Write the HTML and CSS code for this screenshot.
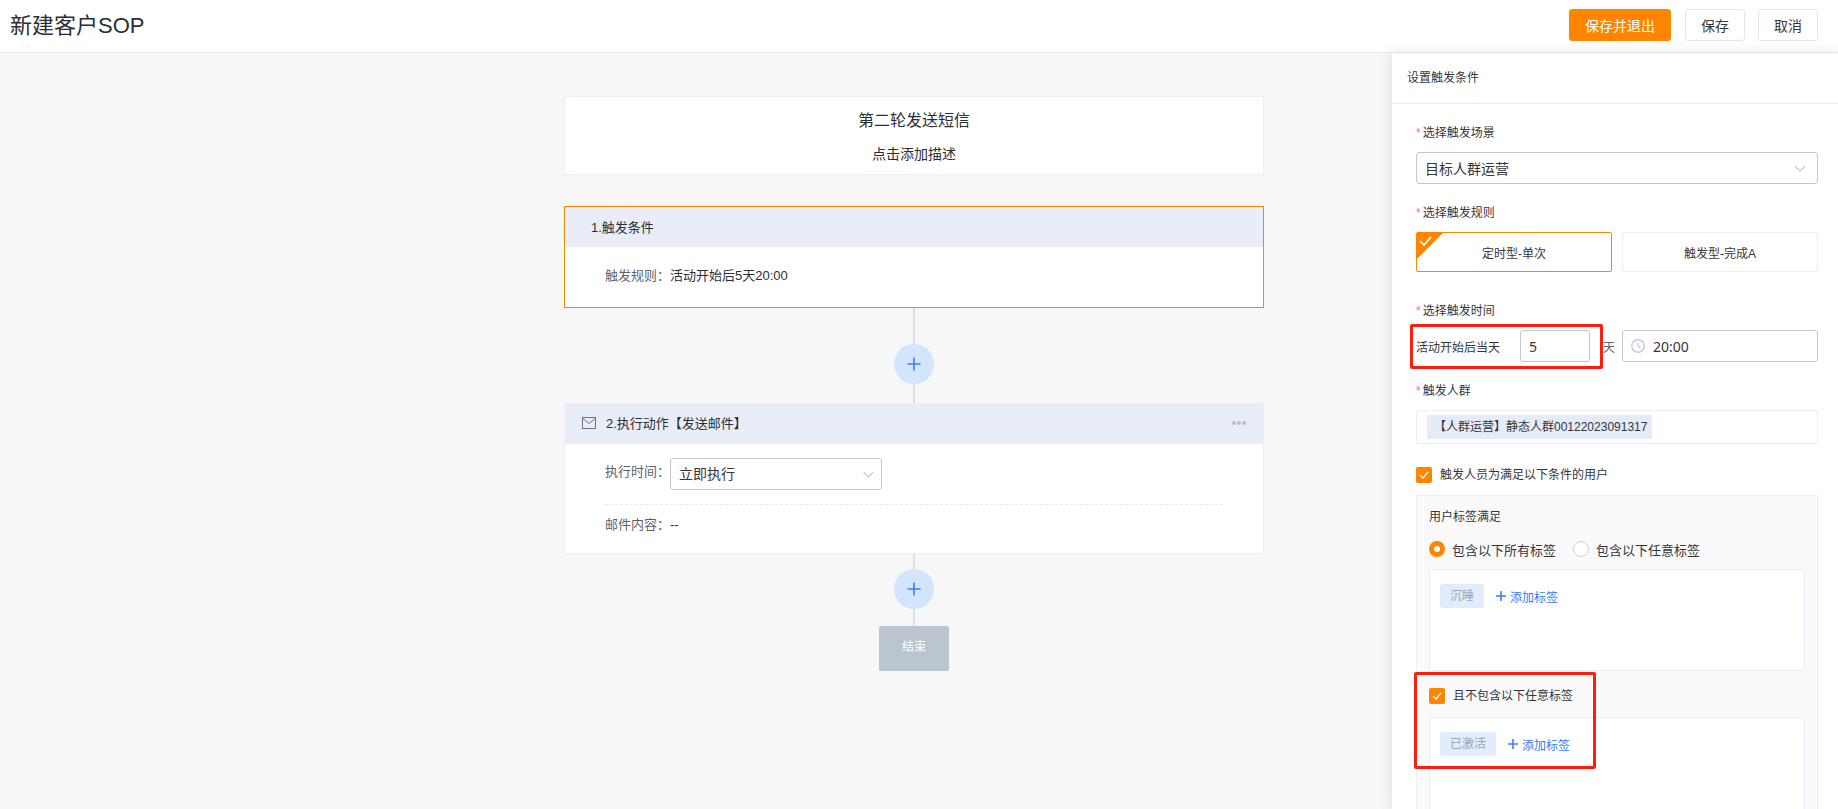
FILE: index.html
```html
<!DOCTYPE html>
<html lang="zh-CN">
<head>
<meta charset="utf-8">
<title>新建客户SOP</title>
<link rel="stylesheet" href="styles.css">
</head>
<body>
<header class="topbar">
  <h1 class="page-title">新建客户SOP</h1>
  <div class="top-actions">
    <button class="btn btn-primary">保存并退出</button>
    <button class="btn">保存</button>
    <button class="btn">取消</button>
  </div>
</header>
<div class="main">
  <section class="canvas">
    <div class="flow">
      <div class="intro-card">
        <div class="intro-title">第二轮发送短信</div>
        <div class="intro-desc">点击添加描述</div>
      </div>
      <div class="trigger-card">
        <div class="card-head trigger-head">1.触发条件</div>
        <div class="trigger-body"><span class="key">触发规则：</span>活动开始后5天20:00</div>
      </div>
      <div class="line line-a"></div>
      <div class="add-circle"><svg width="14" height="14" viewBox="0 0 14 14"><path d="M7 0.5V13.5M0.5 7H13.5" stroke="#3f7cf7" stroke-width="1.6" fill="none"/></svg></div>
      <div class="line line-b"></div>
      <div class="action-card">
        <div class="card-head action-head">
          <svg class="mail-icon" width="14" height="12" viewBox="0 0 14 12"><rect x="0.5" y="0.5" width="13" height="11" fill="none" stroke="#6f7480"/><path d="M0.8 1.5L7 6.5L13.2 1.5" fill="none" stroke="#6f7480"/></svg>
          <span class="action-title">2.执行动作【发送邮件】</span>
          <span class="dots"><i></i><i></i><i></i></span>
        </div>
        <div class="action-body">
          <div class="action-row">
            <span class="key">执行时间：</span>
            <div class="select select-small">
              <span>立即执行</span>
              <svg class="chev" width="11" height="7" viewBox="0 0 11 7"><path d="M0.5 0.8L5.5 6L10.5 0.8" fill="none" stroke="#c3c7d0" stroke-width="1.2"/></svg>
            </div>
          </div>
          <div class="mail-row"><span class="key">邮件内容：</span>--</div>
        </div>
      </div>
      <div class="line line-c"></div>
      <div class="add-circle"><svg width="14" height="14" viewBox="0 0 14 14"><path d="M7 0.5V13.5M0.5 7H13.5" stroke="#3f7cf7" stroke-width="1.6" fill="none"/></svg></div>
      <div class="line line-d"></div>
      <div class="end-node">结束</div>
    </div>
  </section>
  <aside class="panel">
    <div class="panel-title">设置触发条件</div>
    <div class="panel-body">
      <div class="label label-first"><b>*</b>选择触发场景</div>
      <div class="select">
        <span>目标人群运营</span>
        <svg class="chev" width="12" height="7" viewBox="0 0 12 7"><path d="M1 1L6 6L11 1" fill="none" stroke="#c3c7d0" stroke-width="1.2"/></svg>
      </div>
      <div class="label label-rule"><b>*</b>选择触发规则</div>
      <div class="rule-row">
        <div class="rule rule-on">
          <svg class="corner" width="26" height="26" viewBox="0 0 26 26"><path d="M0 0H26L0 26Z" fill="#ff8400"/><path d="M3 8L7 12L14 4" fill="none" stroke="#fff" stroke-width="1.6"/></svg>
          定时型-单次
        </div>
        <div class="rule">触发型-完成A</div>
      </div>
      <div class="label label-time"><b>*</b>选择触发时间</div>
      <div class="time-row">
        <span class="time-text">活动开始后当天</span>
        <div class="num-input">5</div>
        <span class="day">天</span>
        <div class="clock-input">
          <svg width="14" height="14" viewBox="0 0 14 14"><circle cx="7" cy="7" r="6.2" fill="none" stroke="#c3c7d6" stroke-width="1.4"/><path d="M7 3.5V7.3L9.5 9" fill="none" stroke="#c3c7d6" stroke-width="1.2"/></svg>
          <span>20:00</span>
        </div>
        <div class="mark mark-time"></div>
      </div>
      <div class="label label-crowd"><b>*</b>触发人群</div>
      <div class="crowd-box"><span class="crowd-tag">【人群运营】静态人群00122023091317</span></div>
      <div class="check-row check-row-outer">
        <span class="checkbox"><svg width="10" height="8" viewBox="0 0 10 8"><path d="M1 4L4 7L9 1" fill="none" stroke="#fff" stroke-width="1.2"/></svg></span>
        <span>触发人员为满足以下条件的用户</span>
      </div>
      <div class="cond-box">
        <div class="cond-title">用户标签满足</div>
        <div class="radio-row">
          <span class="radio radio-on"></span><span class="radio-text">包含以下所有标签</span>
          <span class="radio"></span><span class="radio-text">包含以下任意标签</span>
        </div>
        <div class="tag-box">
          <span class="tag tag-two">沉睡</span>
          <span class="add-tag"><svg width="10" height="10" viewBox="0 0 10 10"><path d="M5 0V10M0 5H10" stroke="#3f7cf7" stroke-width="1.6" fill="none"/></svg>添加标签</span>
        </div>
        <div class="check-row check-row-inner">
          <span class="checkbox"><svg width="10" height="8" viewBox="0 0 10 8"><path d="M1 4L4 7L9 1" fill="none" stroke="#fff" stroke-width="1.2"/></svg></span>
          <span>且不包含以下任意标签</span>
        </div>
        <div class="tag-box tag-box-last">
          <span class="tag tag-three">已激活</span>
          <span class="add-tag"><svg width="10" height="10" viewBox="0 0 10 10"><path d="M5 0V10M0 5H10" stroke="#3f7cf7" stroke-width="1.6" fill="none"/></svg>添加标签</span>
        </div>
        <div class="mark mark-exclude"></div>
      </div>
    </div>
  </aside>
</div>
</body>
</html>
```

FILE: styles.css
```css
* { box-sizing: border-box; }
html, body { height: 100%; }
body {
  margin: 0;
  height: 809px;
  overflow: hidden;
  display: flex;
  flex-direction: column;
  background: #f7f7f7;
  color: #33363d;
  font-family: "Liberation Sans", "Noto Sans CJK SC", sans-serif;
  font-size: 12px;
}
.topbar {
  flex: none;
  height: 53px;
  display: flex;
  align-items: center;
  justify-content: space-between;
  padding: 0 20px 2px 10px;
  background: #fff;
  border-bottom: 1px solid #e8ecf4;
}
.page-title { margin: 2px 0 0; font-size: 22px; font-weight: 400; color: #2b2e35; line-height: 30px; }
.top-actions { display: flex; gap: 13px; }
.btn {
  width: 60px;
  height: 32px;
  padding: 0;
  border: 1px solid #e3e6ef;
  border-radius: 3px;
  background: #fff;
  color: #33363d;
  font: inherit;
  font-size: 14px;
}
.btn-primary {
  width: 102px;
  margin-right: 1px;
  background: #ff8400;
  border-color: #ff8400;
  color: #fff;
}
.main { flex: 1; min-height: 0; display: flex; }
.canvas { flex: 1; min-width: 0; padding: 43px 0 0 564px; }
.flow { width: 700px; display: flex; flex-direction: column; align-items: center; }
.intro-card {
  width: 100%;
  height: 79px;
  display: flex;
  flex-direction: column;
  align-items: center;
  background: #fff;
  border: 1px solid #eceef8;
  color: #2b2e35;
}
.intro-title { margin-top: 13px; font-size: 16px; line-height: 22px; }
.intro-desc { margin-top: 12px; font-size: 14px; line-height: 20px; }
.trigger-card {
  width: 100%;
  height: 102px;
  margin-top: 31px;
  background: #fff;
  border: 1px solid #ff8400;
}
.card-head { background: #e9edf7; display: flex; align-items: center; font-size: 13px; color: #2b2e35; }
.trigger-head { height: 40px; padding: 0 0 2px 26px; }
.trigger-body { padding: 19px 0 0 40px; font-size: 13px; line-height: 20px; color: #2b2e35; }
.key { color: #5d6270; }
.line { width: 2px; background: #dcdfe6; }
.line-a { height: 36px; }
.line-b { height: 19px; }
.line-c { height: 15px; }
.line-d { height: 17px; }
.add-circle {
  width: 40px;
  height: 40px;
  flex: none;
  display: flex;
  align-items: center;
  justify-content: center;
  border-radius: 50%;
  background: #d3e4fd;
}
.action-card {
  width: 100%;
  height: 151px;
  background: #fff;
  border: 1px solid #eceef8;
  border-top: 0;
}
.action-head { height: 41px; padding: 0 17px 2px 17px; }
.mail-icon { flex: none; margin-right: 10px; }
.action-title { flex: 1; }
.dots { display: flex; gap: 1px; }
.dots i { width: 4px; height: 4px; border-radius: 50%; background: #b9bdc9; }
.action-body { margin: 0 40px; font-size: 13px; }
.action-row {
  height: 61px;
  padding: 14px 0 13px;
  display: flex;
  align-items: flex-start;
  line-height: 28px;
  border-bottom: 1px dashed #e6e8ee;
}
.select {
  position: relative;
  height: 32px;
  display: flex;
  align-items: center;
  justify-content: space-between;
  padding: 0 11px 0 8px;
  background: #fff;
  border: 1px solid #c3c6d2;
  border-radius: 3px;
  font-size: 14px;
  color: #33363d;
}
.select-small { width: 212px; padding: 0 7px 0 8px; }
.mail-row { padding-top: 10px; line-height: 20px; color: #2b2e35; }
.end-node {
  width: 70px;
  height: 45px;
  padding-top: 12px;
  text-align: center;
  line-height: 18px;
  color: #fff;
  background: #b9c5cf;
  border-radius: 2px;
}
.panel {
  flex: none;
  width: 446px;
  background: #fff;
  box-shadow: 0 0 12px rgba(80, 90, 120, 0.16);
  overflow: hidden;
}
.panel-title {
  height: 51px;
  padding-left: 15px;
  line-height: 50px;
  color: #33363d;
  border-bottom: 1px solid #e8ebf3;
}
.panel-body { padding: 0 20px 0 24px; }
.label { line-height: 20px; margin-bottom: 9px; color: #33363d; }
.label b { margin-right: 2px; color: #f56c8a; font-weight: 400; }
.label-first { margin-top: 19px; }
.label-rule { margin-top: 19px; }
.label-time { margin-top: 29px; }
.label-crowd { margin-top: 19px; }
.rule-row { display: flex; gap: 10px; }
.rule {
  position: relative;
  flex: 1;
  height: 40px;
  display: flex;
  align-items: center;
  justify-content: center;
  background: #fff;
  border: 1px solid #eceef6;
  border-radius: 2px;
}
.rule-on { border-color: #ff8400; }
.corner { position: absolute; left: 0; top: 0; }
.time-row { position: relative; display: flex; align-items: center; height: 32px; }
.time-text { width: 104px; }
.num-input, .clock-input {
  height: 32px;
  display: flex;
  align-items: center;
  border: 1px solid #c3c6d2;
  border-radius: 3px;
  font-size: 14px;
  font-family: "Noto Sans", "Noto Sans CJK SC", sans-serif;
}
.num-input { width: 70px; padding-left: 8px; }
.day { width: 32px; padding-left: 13px; color: #5d6270; }
.clock-input { flex: 1; padding-left: 8px; gap: 8px; }
.mark { position: absolute; border: 3px solid #ff1e0e; border-radius: 2px; pointer-events: none; }
.mark-time { left: -6px; top: -6px; width: 193px; height: 45px; }
.crowd-box {
  height: 34px;
  padding: 4px 0 0 10px;
  border: 1px solid #eceef6;
  border-radius: 2px;
}
.crowd-tag {
  display: inline-block;
  height: 24px;
  padding: 0 5px 0 7px;
  line-height: 24px;
  background: #e5ebf8;
  color: #33363d;
}
.check-row { display: flex; align-items: center; gap: 8px; line-height: 16px; }
.check-row-outer { margin-top: 23px; }
.check-row-inner { margin-top: 17px; }
.checkbox {
  width: 16px;
  height: 16px;
  flex: none;
  display: flex;
  align-items: center;
  justify-content: center;
  background: #ff8400;
  border-radius: 2px;
}
.cond-box {
  position: relative;
  height: 400px;
  margin-top: 12px;
  padding: 11px 12px 0;
  background: #fafafb;
  border: 1px solid #eceef6;
  border-radius: 2px;
}
.cond-title { line-height: 20px; }
.radio-row { display: flex; align-items: center; margin-top: 14px; height: 16px; }
.radio { width: 16px; height: 16px; flex: none; background: #fff; border: 1px solid #cfd2da; border-radius: 50%; }
.radio-on { border: 5px solid #ff8400; }
.radio-text { width: 128px; padding-left: 7px; font-size: 13px; }
.tag-box {
  height: 102px;
  margin-top: 12px;
  padding: 14px 0 0 10px;
  display: flex;
  align-items: flex-start;
  gap: 12px;
  background: #fff;
  border: 1px solid #eceef6;
  border-radius: 3px;
}
.tag-box-last { height: 200px; margin-top: 13px; }
.tag {
  height: 24px;
  line-height: 24px;
  text-align: center;
  color: #9aa5b8;
  background: #e1edfd;
  border-radius: 2px;
}
.tag-two { width: 44px; }
.tag-three { width: 56px; }
.add-tag { display: flex; align-items: center; gap: 4px; height: 24px; color: #2f7cf6; }
.mark-exclude { left: -3px; top: 176px; width: 182px; height: 97px; }
```
